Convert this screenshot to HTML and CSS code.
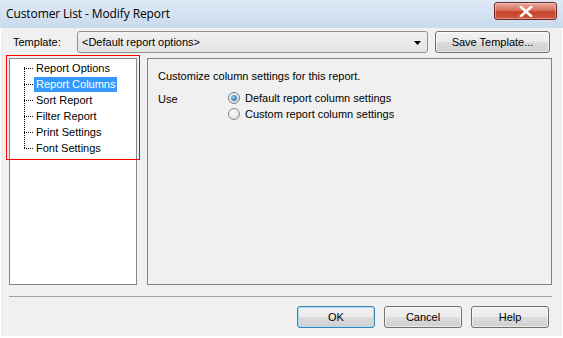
FILE: index.html
```html
<!DOCTYPE html>
<html>
<head>
<meta charset="utf-8">
<link rel="stylesheet" href="styles.css">
</head>
<body>
<div class="window">
  <div class="titlebar">
    <span class="title">Customer List - Modify Report</span>
    <div class="close"><svg width="14" height="11" viewBox="0 0 14 11"><path d="M2 1 L12 10 M12 1 L2 10" stroke="#fff" stroke-width="2.6" stroke-linecap="square"/></svg></div>
  </div>
  <div class="body">
    <div class="toprow">
      <span class="tlabel">Template:</span>
      <div class="combo"><span>&lt;Default report options&gt;</span><svg class="arrow" width="7" height="4" viewBox="0 0 7 4"><path d="M0 0 H7 L3.5 4 Z" fill="#000"/></svg></div>
      <div class="btn save">Save Template...</div>
    </div>
    <div class="main">
      <div class="tree">
        <div class="redbox"></div>
        <div class="treelist">
          <div class="vline"></div>
          <div class="item"><span class="hl"></span><span class="txt">Report Options</span></div>
          <div class="item sel"><span class="hl"></span><span class="txt">Report Columns</span></div>
          <div class="item"><span class="hl"></span><span class="txt">Sort Report</span></div>
          <div class="item"><span class="hl"></span><span class="txt">Filter Report</span></div>
          <div class="item"><span class="hl"></span><span class="txt">Print Settings</span></div>
          <div class="item last"><span class="hl"></span><span class="txt">Font Settings</span></div>
        </div>
      </div>
      <div class="panel">
        <div class="desc">Customize column settings for this report.</div>
        <div class="userow">
          <span class="use">Use</span>
          <div class="radios">
            <div class="radio on"><span class="dot"></span>Default report column settings</div>
            <div class="radio"><span class="dot"></span>Custom report column settings</div>
          </div>
        </div>
      </div>
    </div>
    <div class="sep"></div>
    <div class="buttons">
      <div class="btn ok">OK</div>
      <div class="btn">Cancel</div>
      <div class="btn">Help</div>
    </div>
  </div>
</div>
</body>
</html>
```
FILE: styles.css
```css
html, body { margin: 0; padding: 0; background: #fff; }
body { width: 563px; height: 338px; overflow: hidden; font-family: "Liberation Sans", Arial, sans-serif; font-size: 11px; color: #000; }
.window { width: 563px; height: 336px; display: flex; flex-direction: column; }
.titlebar { height: 28px; flex: none; display: flex; align-items: flex-start; justify-content: space-between; background: linear-gradient(#dfe9f5, #c9dbee); }
.title { font-family: "Open Sans", "Liberation Sans", sans-serif; font-size: 12px; padding: 5px 0 0 6px; color: #000; letter-spacing: -0.1px; }
.close { margin: 2px 6px 0 0; width: 63px; height: 18px; box-sizing: border-box; border: 1px solid #6d2a22; border-radius: 3px; background: linear-gradient(#e9a99c 0%, #d9725f 45%, #c4422b 55%, #d0593f 100%); display: flex; align-items: center; justify-content: center; box-shadow: inset 0 0 0 1px rgba(255,255,255,0.35); }
.body { flex: 1; margin: 0 1px 0 1px; background: #f0f0f0; display: flex; flex-direction: column; padding: 3px 10px 0 8px; }
.toprow { display: flex; align-items: center; height: 22px; margin-top: 0; }
.tlabel { width: 68px; padding-left: 4px; box-sizing: border-box; }
.combo { width: 351px; height: 22px; box-sizing: border-box; border: 1px solid #8e8f8f; border-radius: 3px; background: linear-gradient(#f2f2f2, #e3e3e3); display: flex; align-items: center; justify-content: space-between; padding: 0 6px 0 4px; }
.arrow { margin-top: 1px; }
.btn { height: 22px; box-sizing: border-box; border: 1px solid #707070; border-radius: 3px; background: linear-gradient(#f2f2f2 0%, #ebebeb 50%, #dddddd 51%, #cfcfcf 100%); display: flex; align-items: center; justify-content: center; box-shadow: inset 0 0 0 1px rgba(255,255,255,0.6); }
.save { width: 115px; margin-left: 7px; }
.main { display: flex; margin-top: 5px; height: 227px; }
.tree { position: relative; width: 128px; box-sizing: border-box; border: 1px solid #828790; background: #fff; }
.redbox { position: absolute; left: -4px; top: -4px; width: 134px; height: 105px; border: 1px solid #ff0000; box-sizing: border-box; }
.treelist { position: relative; padding: 1px 0 0 14px; }
.vline { position: absolute; left: 14px; top: 8px; height: 81px; border-left: 1px dotted #000; }
.item { display: flex; align-items: center; height: 16px; }
.hl { width: 9px; height: 0; border-top: 1px dotted #000; margin-right: 1px; }
.txt { padding: 1px 2px; line-height: 13px; }
.sel .txt { background: #3399ff; color: #fff; }
.panel { flex: 1; margin-left: 10px; box-sizing: border-box; border: 1px solid #828282; padding: 10px 0 0 10px; }
.desc { height: 16px; margin-top: 1px; }
.userow { display: flex; margin-top: 4px; }
.use { width: 70px; padding-top: 3px; }
.radios { display: flex; flex-direction: column; }
.radio { display: flex; align-items: center; height: 16px; }
.dot { width: 12px; height: 12px; box-sizing: border-box; border-radius: 50%; border: 1px solid #8a8a8a; background: radial-gradient(circle at 40% 35%, #fefefe, #d6d6d6); margin-right: 5px; position: relative; }
.radio.on .dot { border-color: #6b7f95; }
.radio.on .dot::after { content: ""; position: absolute; left: 2px; top: 2px; width: 6px; height: 6px; border-radius: 50%; background: radial-gradient(circle at 40% 35%, #8ad0f5, #15538a); }
.sep { margin-top: 11px; border-top: 1px solid #a0a0a0; }
.buttons { display: flex; justify-content: flex-end; margin-top: 9px; gap: 9px; padding-right: 3px; }
.buttons .btn { width: 78px; }
.buttons .ok { border-color: #3c7fb1; box-shadow: inset 0 0 0 1px #a8def6; }
```
